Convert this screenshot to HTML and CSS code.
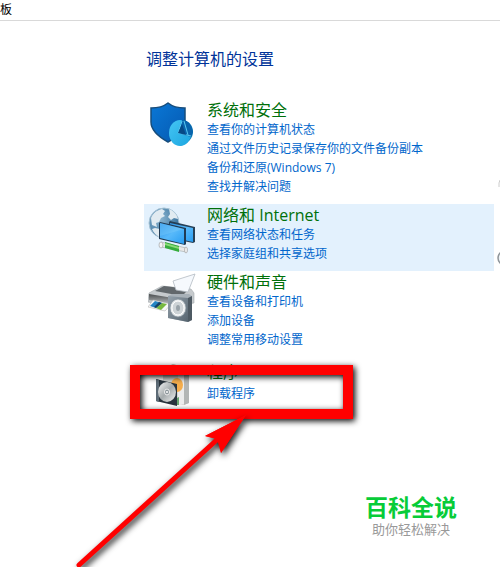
FILE: index.html
```html
<!DOCTYPE html>
<html lang="zh-CN">

<head>
  <meta charset="utf-8">
  <title>控制面板</title>
  <link rel="stylesheet" href="styles.css">
</head>

<body>
  <header class="topbar">板</header>

  <main class="panel">
    <h1>调整计算机的设置</h1>

    <section class="item">
      <svg class="icon" viewBox="0 0 48 50">
        <defs>
          <linearGradient id="shield" x1="0" y1="0" x2="1" y2="1">
            <stop offset="0" stop-color="#0a78d6" />
            <stop offset="1" stop-color="#0558b0" />
          </linearGradient>
          <linearGradient id="pie" x1="0" y1="0" x2="1" y2="1">
            <stop offset="0" stop-color="#45c5f4" />
            <stop offset="1" stop-color="#1ba6e0" />
          </linearGradient>
        </defs>
        <path d="M20 2C15 6 9 7 3 7v14c0 9 8 15 17 20c9-5 17-11 17-20V7C31 7 25 6 20 2z" fill="url(#shield)" stroke="#174d7c" stroke-width="1.5" />
        <path d="M33 19c8 0 12 6 12 12s-5 12-13 14z" fill="#1683bb" />
        <ellipse cx="32" cy="32" rx="11" ry="13" fill="url(#pie)" />
        <path d="M34 19c7 0 10 6 11 12l-2 5-13-4z" fill="#0864ac" />
        <path d="M34 20l-4 12 13 3M36 20l4 14" fill="none" stroke="#5acaf1" stroke-width="1" />
        <path d="M34 23l-4 9 8 2z" fill="#064a86" />
      </svg>
      <div>
        <h2><a href="#">系统和安全</a></h2>
        <ul class="links">
          <li><a href="#">查看你的计算机状态</a></li>
          <li><a href="#">通过文件历史记录保存你的文件备份副本</a></li>
          <li><a href="#">备份和还原(Windows 7)</a></li>
          <li><a href="#">查找并解决问题</a></li>
        </ul>
      </div>
    </section>

    <section class="item active">
      <svg class="icon" viewBox="0 0 48 50">
        <defs>
          <radialGradient id="globe" cx="0.35" cy="0.35" r="0.7">
            <stop offset="0" stop-color="#8fb8d2" />
            <stop offset="1" stop-color="#356f9a" />
          </radialGradient>
          <linearGradient id="screen" x1="0" y1="0" x2="1" y2="1">
            <stop offset="0" stop-color="#2c94e8" />
            <stop offset="0.5" stop-color="#58b9fa" />
            <stop offset="1" stop-color="#289df2" />
          </linearGradient>
        </defs>
        <circle cx="16" cy="17" r="15" fill="url(#globe)" stroke="#a7c3d5" />
        <path d="M3 12c2-5 6-8 11-9l3 2-2 3 2 2-4 2-2 4-3 1 1 4-5-2zM21 3c5 2 8 6 9 10l-4-1-3 2-3-3 2-3zM7 22l5 1 2 4-3 4c-3-2-6-5-7-8z" fill="#e1ebf1" />
        <path d="M21 16l1-1 25 6v15l-2 1-24-5z" fill="#253f56" />
        <path d="M22 17l23 5v14l-23-5z" fill="url(#screen)" />
        <path d="M11 17l1-1 26 6v16l-1 1-26-6z" fill="#203b54" />
        <path d="M12 17l24 6v15l-24-6z" fill="url(#screen)" />
        <path d="M12 17l24 6-24 7z" fill="#7bcafa" opacity="0.4" />
        <path d="M13 36l25 6v4l-25-5z" fill="#e9e9e9" stroke="#a2aaa8" stroke-width="0.6" />
        <path d="M17 36l14 4v6l-14-4z" fill="#35ad3c" />
        <path d="M17 37l14 4v2l-14-4z" fill="#8bda79" />
        <ellipse cx="13" cy="39" rx="2" ry="3" fill="#f4f4f4" stroke="#999" stroke-width="0.6" />
        <ellipse cx="38" cy="44" rx="1.5" ry="3" fill="#eee" stroke="#999" stroke-width="0.6" />
      </svg>
      <div>
        <h2><a href="#">网络和 Internet</a></h2>
        <ul class="links">
          <li><a href="#">查看网络状态和任务</a></li>
          <li><a href="#">选择家庭组和共享选项</a></li>
        </ul>
      </div>
    </section>

    <section class="item">
      <svg class="icon" viewBox="0 0 48 50">
        <defs>
          <linearGradient id="printer" x1="0" y1="0" x2="0" y2="1">
            <stop offset="0" stop-color="#4b4e50" />
            <stop offset="1" stop-color="#b9bdbf" />
          </linearGradient>
          <linearGradient id="speaker" x1="0" y1="0" x2="1" y2="1">
            <stop offset="0" stop-color="#95a2ac" />
            <stop offset="1" stop-color="#56646f" />
          </linearGradient>
        </defs>
        <path d="M1 20L14 13l29 3 3 4v10l-22 4L0 29z" fill="#c6cacd" stroke="#a5abaf" stroke-width="0.6" />
        <path d="M7 18l9-5 25 3-7 7z" fill="#62686c" />
        <path d="M25 8L47 1 40 19 28 17z" fill="#f6f9fd" stroke="#b3bac1" stroke-width="0.8" />
        <path d="M1 21l24 4v6L1 27z" fill="url(#printer)" />
        <path d="M5 27l18 4-6 7L0 34z" fill="#f8f8f8" stroke="#aaa" stroke-width="0.5" />
        <path d="M7 28l7 2-6 5-6-2z" fill="#2484c4" />
        <path d="M14 30l5 1-6 6-5-2z" fill="#77b83f" />
        <path d="M11 29l3 1-6 5-2-1z" fill="#174267" />
        <path d="M20 23l4-2h17l3 2v24l-4 2-20-4z" fill="#a8b1b8" />
        <path d="M20 23l20 2v24l-20-4z" fill="url(#speaker)" />
        <path d="M40 25l4-2v24l-4 2z" fill="#4e5a63" />
        <ellipse cx="30" cy="35" rx="8" ry="9" fill="#e5e9ea" stroke="#84919a" stroke-width="0.8" />
        <ellipse cx="30" cy="35" rx="6" ry="7" fill="#cdd3d6" stroke="#fff" />
        <ellipse cx="30" cy="35" rx="2" ry="3" fill="#98a2a8" />
      </svg>
      <div>
        <h2><a href="#">硬件和声音</a></h2>
        <ul class="links">
          <li><a href="#">查看设备和打印机</a></li>
          <li><a href="#">添加设备</a></li>
          <li><a href="#">调整常用移动设置</a></li>
        </ul>
      </div>
    </section>

    <section class="item programs">
      <svg class="icon" viewBox="0 0 48 50">
        <defs>
          <linearGradient id="disc" x1="0" y1="0" x2="1" y2="1">
            <stop offset="0" stop-color="#f8f8f8" />
            <stop offset="0.5" stop-color="#a5abad" />
            <stop offset="1" stop-color="#f1f1f1" />
          </linearGradient>
        </defs>
        <path d="M15 6L25 1l16 5v34l-6 2-20-5z" fill="#d5d7d4" />
        <path d="M30 8l6-1v34l-6 1z" fill="#ececec" />
        <path d="M36 7l5-1v34l-5 2z" fill="#b3b6b5" />
        <path d="M15 6L25 1l16 5-5 2z" fill="#c2c0b6" />
        <ellipse cx="29" cy="22" rx="6" ry="7" fill="#f5ad4c" />
        <path d="M23 38l8-4v8h-4z" fill="#68a56f" />
        <path d="M8 16l21 5v22L8 38z" fill="#29343d" />
        <path d="M8 16l3 1v22l-3-1z" fill="#5d6b76" />
        <ellipse cx="19" cy="29" rx="9" ry="10" fill="url(#disc)" />
        <ellipse cx="19" cy="29" rx="2.5" ry="3" fill="#8b959a" stroke="#eee" />
        <circle cx="19" cy="29" r="1" fill="#fff" />
      </svg>
      <div>
        <h2><a href="#">程序</a></h2>
        <ul class="links">
          <li><a href="#">卸载程序</a></li>
        </ul>
      </div>
    </section>
  </main>

  <footer class="brand">
    <strong>百科全说</strong>
    <span>助你轻松解决</span>
  </footer>

  <!-- 右侧露出的按钮边缘 -->
  <svg class="edge" viewBox="0 0 4 90">
    <path d="M4 6L3 9v4" fill="none" stroke="#ccc" />
    <circle cx="9" cy="84" r="7" fill="#eef3f6" stroke="#8e9499" stroke-width="1.5" />
  </svg>

  <!-- 红框和箭头 -->
  <div class="mark"></div>
  <svg class="arrow" viewBox="0 0 190 159">
    <path d="M9 155L150 27" stroke="#f00" stroke-width="5" stroke-linecap="round" />
    <path d="M176 5L135 26l12 3 4 14z" fill="#f00" />
    <path d="M176 5L135 26l12 3 3 4 1 10z" fill="#f00" />
  </svg>
</body>

</html>
```
FILE: styles.css
```css
* {
  box-sizing: border-box;
}

body {
  position: relative;
  margin: 0;
  background: #fff;
  font-family: "Open Sans", "Noto Sans CJK SC", sans-serif;
  font-size: 12px;
  overflow-x: hidden;
}

.topbar {
  height: 21px;
  line-height: 19px;
  border-bottom: 1px solid #d9d9d9;
  color: #000;
}

.panel {
  margin: 0 6px 0 144px;
}

h1 {
  margin: 0;
  padding: 26px 0 28px 2px;
  font-size: 16px;
  font-weight: normal;
  line-height: 24px;
  color: #003399;
}

.item {
  display: flex;
  gap: 11px;
  padding: 1px 0 8px 4px;
}

.active {
  background: #e3f1fd;
}

.icon {
  flex: none;
  width: 48px;
  height: 50px;
  margin: 1px 0 -4px;
}

h2 {
  margin: 0;
  font-size: 16px;
  font-weight: normal;
  line-height: 20px;
}

h2 a {
  color: #00700a;
}

a {
  text-decoration: none;
}

.links {
  margin: 0;
  padding: 0;
  list-style: none;
  line-height: 19px;
}

.links a {
  color: #0066cc;
}

.programs {
  margin-top: 4px;
}

.programs h2 {
  margin-bottom: 2px;
}

.brand {
  display: flex;
  flex-direction: column;
  align-items: center;
  width: 92px;
  margin: 76px 43px 30px auto;
  white-space: nowrap;
}

.brand strong {
  font-size: 23px;
  font-weight: bold;
  line-height: 28px;
  color: #07cc38;
}

.brand span {
  font-size: 13px;
  line-height: 16px;
  color: #999;
}

.edge {
  position: absolute;
  top: 174px;
  right: 0;
  width: 4px;
  height: 90px;
}

.mark {
  position: absolute;
  top: 365px;
  left: 130px;
  width: 223px;
  height: 54px;
  border: 10px solid #f00;
  filter: drop-shadow(2px 2px 3px #000);
}

.arrow {
  position: absolute;
  top: 410px;
  left: 70px;
  width: 190px;
  height: 159px;
  filter: drop-shadow(2px 3px 3px rgba(0, 0, 0, 0.9));
}
```
